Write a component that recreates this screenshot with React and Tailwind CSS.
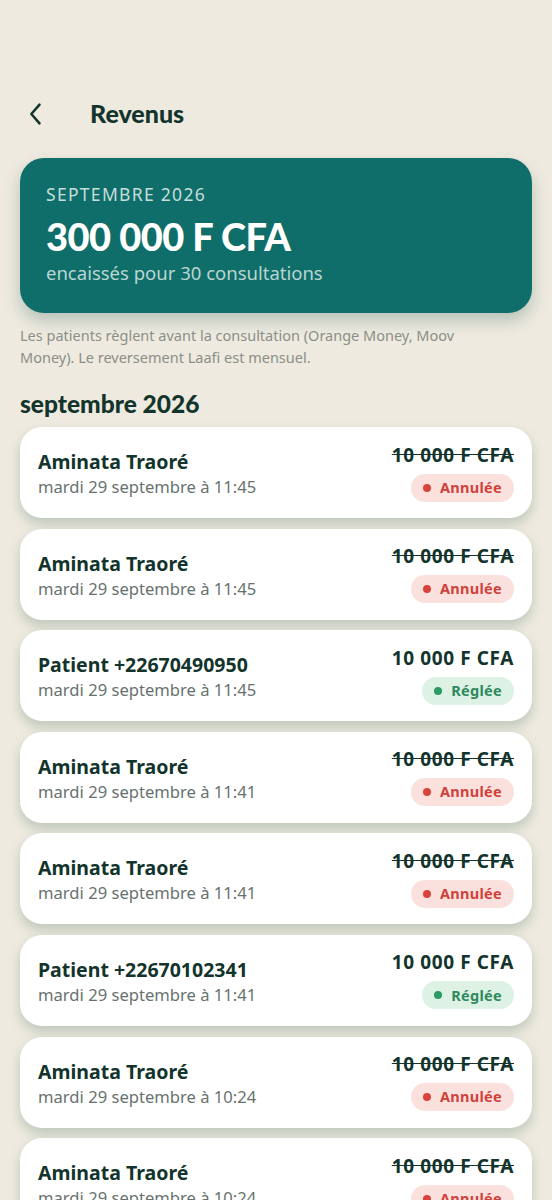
import React from 'react';

const rows = [
  { name: 'Aminata Traoré', date: 'mardi 29 septembre à 11:45', paid: false },
  { name: 'Aminata Traoré', date: 'mardi 29 septembre à 11:45', paid: false },
  { name: 'Patient +22670490950', date: 'mardi 29 septembre à 11:45', paid: true },
  { name: 'Aminata Traoré', date: 'mardi 29 septembre à 11:41', paid: false },
  { name: 'Aminata Traoré', date: 'mardi 29 septembre à 11:41', paid: false },
  { name: 'Patient +22670102341', date: 'mardi 29 septembre à 11:41', paid: true },
  { name: 'Aminata Traoré', date: 'mardi 29 septembre à 10:24', paid: false },
  { name: 'Aminata Traoré', date: 'mardi 29 septembre à 10:24', paid: false },
];

const body = { fontFamily: '"Noto Sans", Lato, sans-serif' };
const heavy = { fontFamily: 'Lato, "Noto Sans", sans-serif', fontWeight: 900 };

// ligne de paiement
const Row = ({ name, date, paid }) => (
  <div className="bg-white rounded-[22px] h-[91px] px-[18px] flex items-center justify-between shadow-[0_6px_12px_rgba(70,110,95,0.28)] shrink-0">
    <div className="flex flex-col gap-[1px] pt-[2px]">
      <span className="text-[19.5px] font-bold text-[#13342c] leading-[26px]">{name}</span>
      <span className="text-[16.6px] text-[#67726e] leading-[22px]">{date}</span>
    </div>
    <div className="flex flex-col items-end gap-[7px] -mt-[1px]">
      <span className={`text-[19px] font-bold text-[#13342c] leading-[24px] tracking-[0.6px] ${paid ? '' : 'line-through'}`}>
        10 000 F CFA
      </span>
      {paid ? (
        <span className="h-[28px] px-[12px] rounded-full bg-[#ddf1e5] flex items-center gap-[9px] text-[14.5px] font-bold text-[#2d8a5c] tracking-[0.3px]">
          <span className="w-[8px] h-[8px] rounded-full bg-[#2d9a62]" />
          Réglée
        </span>
      ) : (
        <span className="h-[28px] px-[12px] rounded-full bg-[#fbe1dd] flex items-center gap-[9px] text-[14.5px] font-bold text-[#d0413b] tracking-[0.3px]">
          <span className="w-[8px] h-[8px] rounded-full bg-[#d9433c]" />
          Annulée
        </span>
      )}
    </div>
  </div>
);

export default function App() {
  return (
    <div className="w-[552px] h-[1200px] overflow-hidden bg-[#eeeadf] px-[20px]" style={body}>
      <div className="h-[88px]" />
      <div className="flex items-center h-[52px] gap-[44px]">
        <svg width="28" height="28" viewBox="0 0 24 24" fill="none" stroke="#13342c" strokeWidth="2.2" strokeLinecap="round" strokeLinejoin="round" className="ml-[2px]">
          <path d="M15 4 L8 12 L15 20" />
        </svg>
        <span className="text-[25px] text-[#13342c] -ml-[4px]" style={heavy}>
          Revenus
        </span>
      </div>

      <div className="mt-[18px] bg-[#0f6e69] rounded-[24px] h-[155px] px-[26px] pt-[25px] shadow-[0_8px_16px_rgba(15,80,70,0.25)]">
        <div className="text-[17.5px] tracking-[1.3px] text-[#c5dedb] leading-[22px]">SEPTEMBRE 2026</div>
        <div className="text-[38px] text-white leading-[46px] mt-[8px] tracking-[-0.5px]" style={heavy}>
          300 000 F CFA
        </div>
        <div className="text-[18.5px] text-[#b9d6d2] leading-[26px] mt-[1px]">encaissés pour 30 consultations</div>
      </div>

      <p className="mt-[11px] text-[14.5px] leading-[22px] text-[#8a8f88] pr-[50px]">
        Les patients règlent avant la consultation (Orange Money, Moov Money). Le reversement Laafi est mensuel.
      </p>

      <h2 className="mt-[22px] text-[24.5px] text-[#13342c] leading-[28px]" style={heavy}>
        septembre 2026
      </h2>

      <div className="mt-[9px] flex flex-col gap-[10.6px]">
        {rows.map((r, i) => (
          <Row key={i} {...r} />
        ))}
      </div>
    </div>
  );
}
